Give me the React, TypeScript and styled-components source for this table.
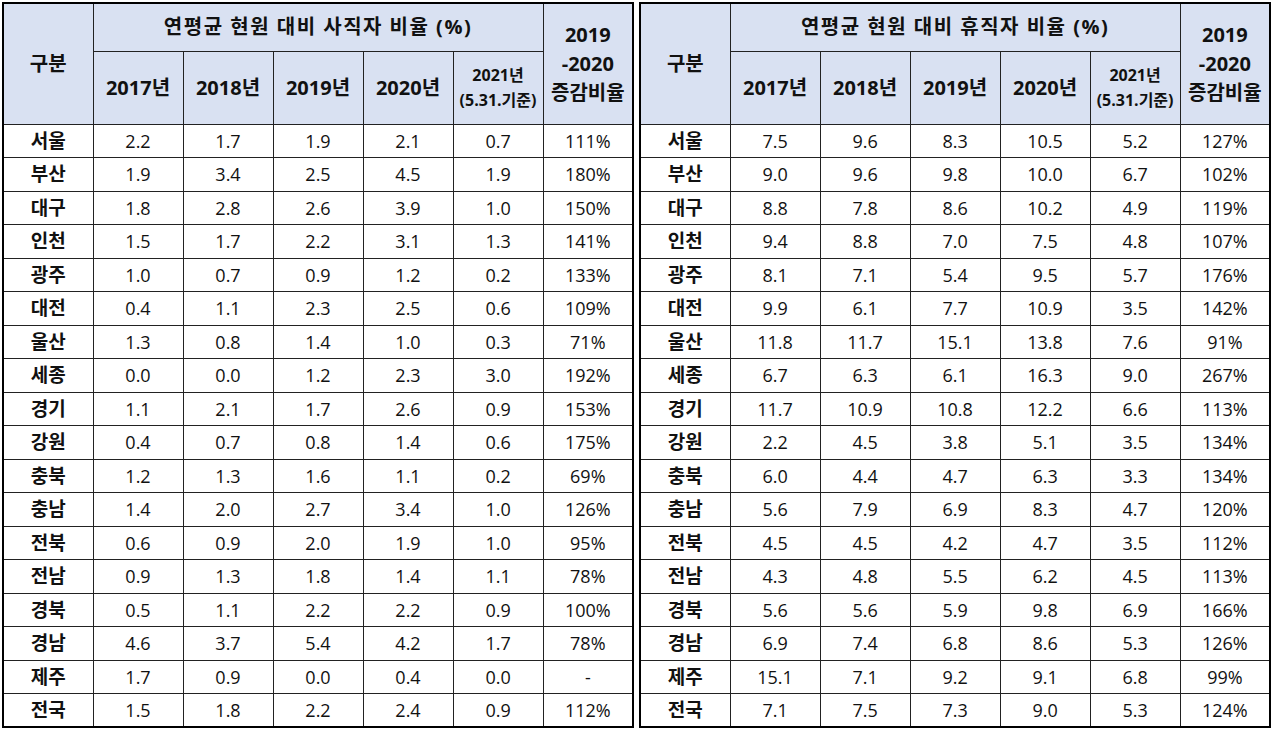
import { createGlobalStyle, styled } from 'styled-components'

type Row = { region: string, values: string[], ratio: string }

const parse = (text: string): Row[] =>
    text.trim().split('\n').map(line => {
        const parts = line.trim().split(/\s+/)
        return { region: parts[0], values: parts.slice(1, 6), ratio: parts[6] }
    })

const resignRows = parse(`
서울 2.2 1.7 1.9 2.1 0.7 111%
부산 1.9 3.4 2.5 4.5 1.9 180%
대구 1.8 2.8 2.6 3.9 1.0 150%
인천 1.5 1.7 2.2 3.1 1.3 141%
광주 1.0 0.7 0.9 1.2 0.2 133%
대전 0.4 1.1 2.3 2.5 0.6 109%
울산 1.3 0.8 1.4 1.0 0.3 71%
세종 0.0 0.0 1.2 2.3 3.0 192%
경기 1.1 2.1 1.7 2.6 0.9 153%
강원 0.4 0.7 0.8 1.4 0.6 175%
충북 1.2 1.3 1.6 1.1 0.2 69%
충남 1.4 2.0 2.7 3.4 1.0 126%
전북 0.6 0.9 2.0 1.9 1.0 95%
전남 0.9 1.3 1.8 1.4 1.1 78%
경북 0.5 1.1 2.2 2.2 0.9 100%
경남 4.6 3.7 5.4 4.2 1.7 78%
제주 1.7 0.9 0.0 0.4 0.0 -
전국 1.5 1.8 2.2 2.4 0.9 112%
`)

const leaveRows = parse(`
서울 7.5 9.6 8.3 10.5 5.2 127%
부산 9.0 9.6 9.8 10.0 6.7 102%
대구 8.8 7.8 8.6 10.2 4.9 119%
인천 9.4 8.8 7.0 7.5 4.8 107%
광주 8.1 7.1 5.4 9.5 5.7 176%
대전 9.9 6.1 7.7 10.9 3.5 142%
울산 11.8 11.7 15.1 13.8 7.6 91%
세종 6.7 6.3 6.1 16.3 9.0 267%
경기 11.7 10.9 10.8 12.2 6.6 113%
강원 2.2 4.5 3.8 5.1 3.5 134%
충북 6.0 4.4 4.7 6.3 3.3 134%
충남 5.6 7.9 6.9 8.3 4.7 120%
전북 4.5 4.5 4.2 4.7 3.5 112%
전남 4.3 4.8 5.5 6.2 4.5 113%
경북 5.6 5.6 5.9 9.8 6.9 166%
경남 6.9 7.4 6.8 8.6 5.3 126%
제주 15.1 7.1 9.2 9.1 6.8 99%
전국 7.1 7.5 7.3 9.0 5.3 124%
`)

const years = ['2017년', '2018년', '2019년', '2020년']

const RatioTable = ({ title, rows }: { title: string, rows: Row[] }) => (
    <Table>
        <colgroup>
            {Array.from({ length: 7 }).map((_, i) => <col key={i} />)}
        </colgroup>
        <thead>
            <TopRow>
                <Head rowSpan={2}>구분</Head>
                <Head colSpan={5} $spaced>{title}</Head>
                <Head rowSpan={2} $tall>2019<br />-2020<br />증감비율</Head>
            </TopRow>
            <SubRow>
                {years.map(y => <Head key={y}>{y}</Head>)}
                <Head $small>2021년<br />(5.31.기준)</Head>
            </SubRow>
        </thead>
        <tbody>
            {rows.map(r => (
                <BodyRow key={r.region}>
                    <Region>{r.region}</Region>
                    {r.values.map((v, i) => <Cell key={i}>{v}</Cell>)}
                    <Cell>{r.ratio}</Cell>
                </BodyRow>
            ))}
        </tbody>
    </Table>
)

export default function App() {
    return (
        <>
            <GlobalStyle />
            <Page>
                <RatioTable title="연평균 현원 대비 사직자 비율 (%)" rows={resignRows} />
                <RatioTable title="연평균 현원 대비 휴직자 비율 (%)" rows={leaveRows} />
            </Page>
        </>
    )
}

const GlobalStyle = createGlobalStyle`
    body {
        margin: 0;
        background: #ffffff;
        font-family: "Open Sans", "Noto Sans CJK KR", sans-serif;
        color: #111111;
    }
`

const Page = styled.main`
    display: flex;
    gap: 5px;
    padding: 2px;
    align-items: flex-start;
`

const Table = styled.table`
    width: 630px;
    table-layout: fixed;
    border-collapse: collapse;
    border: 2px solid #000;

    col {
        width: 90px;
    }
`

const TopRow = styled.tr`
    height: 48px;
`

const SubRow = styled.tr`
    height: 73px;
`

const BodyRow = styled.tr`
    height: 33.5px;
`

const Head = styled.th<{ $small?: boolean, $tall?: boolean, $spaced?: boolean }>`
    background: #d9e1f2;
    border: 1px solid #222;
    padding: 0;
    text-align: center;
    vertical-align: middle;
    font-weight: 700;
    font-size: ${props => props.$small ? '16px' : '20px'};
    line-height: ${props => props.$small ? '25px' : props.$tall ? '29px' : '24px'};
    letter-spacing: ${props => props.$spaced ? '1.5px' : '0'};
    white-space: nowrap;
`

const Cell = styled.td`
    border: 1px solid #222;
    padding: 0;
    text-align: center;
    vertical-align: middle;
    font-size: 18px;
    line-height: 20px;
`

const Region = styled(Cell)`
    font-weight: 700;
    font-size: 19px;
`
